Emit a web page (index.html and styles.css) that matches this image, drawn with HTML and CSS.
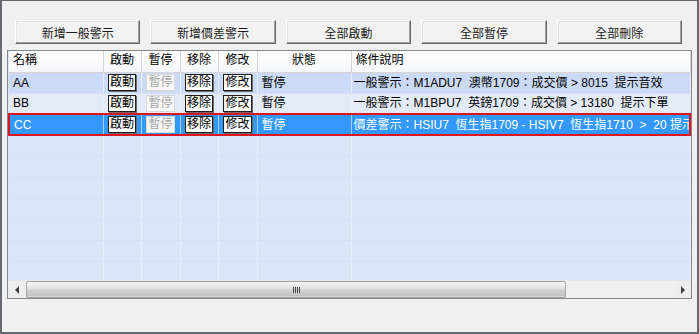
FILE: index.html
```html
<!DOCTYPE html>
<html>
<head>
  <meta charset="utf-8">
  <link rel="stylesheet" href="styles.css">
</head>
<body>
  <div class="window">
    <div class="toolbar">
      <button class="btn">新增一般警示</button>
      <button class="btn">新增價差警示</button>
      <button class="btn">全部啟動</button>
      <button class="btn">全部暫停</button>
      <button class="btn">全部刪除</button>
    </div>

    <div class="list">
      <div class="grid">
        <table class="alerts">
          <colgroup>
            <col class="c-name">
            <col class="c-act">
            <col class="c-act2">
            <col class="c-act">
            <col class="c-act2">
            <col class="c-state">
            <col>
          </colgroup>
          <thead>
            <tr>
              <th class="left">名稱</th>
              <th>啟動</th>
              <th>暫停</th>
              <th>移除</th>
              <th>修改</th>
              <th>狀態</th>
              <th class="left">條件說明</th>
            </tr>
          </thead>
          <tbody>
            <tr class="row-a">
              <td>AA</td>
              <td class="mid"><span class="cell-btn">啟動</span></td>
              <td class="mid"><span class="cell-btn off">暫停</span></td>
              <td class="mid"><span class="cell-btn">移除</span></td>
              <td class="mid"><span class="cell-btn">修改</span></td>
              <td>暫停</td>
              <td class="desc">一般警示：M1ADU7  澳幣1709：成交價 &gt; 8015  提示音效</td>
            </tr>
            <tr class="row-b">
              <td>BB</td>
              <td class="mid"><span class="cell-btn">啟動</span></td>
              <td class="mid"><span class="cell-btn off">暫停</span></td>
              <td class="mid"><span class="cell-btn">移除</span></td>
              <td class="mid"><span class="cell-btn">修改</span></td>
              <td>暫停</td>
              <td class="desc">一般警示：M1BPU7  英鎊1709：成交價 &gt; 13180  提示下單</td>
            </tr>
            <tr class="selected">
              <td>CC</td>
              <td class="mid"><span class="cell-btn">啟動</span></td>
              <td class="mid"><span class="cell-btn off">暫停</span></td>
              <td class="mid"><span class="cell-btn">移除</span></td>
              <td class="mid"><span class="cell-btn">修改</span></td>
              <td>暫停</td>
              <td class="desc">價差警示：HSIU7  恆生指1709 - HSIV7  恆生指1710  &gt;  20 提示</td>
            </tr>
            <tr class="empty"><td></td><td></td><td></td><td></td><td></td><td></td><td></td></tr>
            <tr class="empty"><td></td><td></td><td></td><td></td><td></td><td></td><td></td></tr>
            <tr class="empty"><td></td><td></td><td></td><td></td><td></td><td></td><td></td></tr>
            <tr class="empty"><td></td><td></td><td></td><td></td><td></td><td></td><td></td></tr>
            <tr class="empty"><td></td><td></td><td></td><td></td><td></td><td></td><td></td></tr>
            <tr class="empty"><td></td><td></td><td></td><td></td><td></td><td></td><td></td></tr>
            <tr class="empty"><td></td><td></td><td></td><td></td><td></td><td></td><td></td></tr>
            <tr class="empty"><td></td><td></td><td></td><td></td><td></td><td></td><td></td></tr>
            <tr class="empty"><td></td><td></td><td></td><td></td><td></td><td></td><td></td></tr>
          </tbody>
        </table>
      </div>

      <div class="hscroll">
        <div class="arrow"><span class="tri-left"></span></div>
        <div class="track">
          <div class="thumb"><span class="grip"></span></div>
        </div>
        <div class="arrow"><span class="tri-right"></span></div>
      </div>
    </div>
  </div>
</body>
</html>
```

FILE: styles.css
```css
body {
  margin: 0;
  font-family: "Liberation Sans", "Noto Sans CJK TC", sans-serif;
  font-size: 12px;
  color: #000000;
}

.window {
  box-sizing: border-box;
  width: 699px;
  height: 334px;
  background-color: #f0f0f0;
  border-style: solid;
  border-color: #666a70;
  border-width: 1px 2px 2px 2px;
  display: flex;
  flex-direction: column;
}

.toolbar {
  display: flex;
  gap: 10px;
  padding: 19px 15px 0 13px;
}

.btn {
  flex: 1;
  height: 24px;
  padding: 0;
  font-family: inherit;
  font-size: 12px;
  color: #1a1a1a;
  background-color: #f2f2f2;
  border: 1px solid;
  border-color: #ffffff #6a6a6a #6a6a6a #ffffff;
  box-shadow: inset -1px -1px #a0a0a0, inset 1px 1px #e4e4e4;
}

.list {
  box-sizing: border-box;
  height: 249px;
  margin: 6px 5px 0 5px;
  border: 1px solid #828790;
  display: flex;
  flex-direction: column;
  background-color: #dbe5f8;
}

.grid {
  flex: 1;
  overflow: hidden;
}

.alerts {
  width: 100%;
  table-layout: fixed;
  border-collapse: collapse;
  font-size: 12px;
}

.c-name { width: 94px; }
.c-act { width: 38px; }
.c-act2 { width: 39px; }
.c-state { width: 94px; }

.alerts th {
  box-sizing: border-box;
  height: 21px;
  padding: 0 4px 2px;
  line-height: 16px;
  font-weight: normal;
  text-align: center;
  background: linear-gradient(#ffffff, #f6f7f9);
  border-right: 1px solid #d5d5d5;
  border-bottom: 1px solid #d5d5d5;
  white-space: nowrap;
}

.alerts th.left {
  text-align: left;
}

.alerts td {
  box-sizing: border-box;
  height: 21px;
  padding: 0 4px;
  line-height: 16px;
  border-right: 1px solid #e9eff9;
  border-bottom: 1px solid #d6e1f6;
  white-space: pre;
  overflow: hidden;
}

.alerts td.mid {
  text-align: center;
  padding: 0;
}

.alerts td.desc {
  padding-left: 2px;
  padding-right: 0;
}

.row-a td {
  background-color: #cbdaf6;
}

.row-b td {
  background-color: #e4ebf8;
}

.selected td {
  background-color: #3399ff;
  color: #ffffff;
  border-top: 2px solid #e0141b;
  border-bottom: 2px solid #e0141b;
  border-right: 1px solid #a9cdf5;
}

.selected td:first-child {
  border-left: 2px solid #e0141b;
}

.selected td:last-child {
  border-right: 2px solid #e0141b;
}

.cell-btn {
  display: inline-block;
  vertical-align: middle;
  height: 15px;
  line-height: 15px;
  padding: 0 1px;
  background-color: #ffffff;
  color: #000000;
  border: 1px solid #1e1e1e;
  box-shadow: 1px 1px 0 #6b6b6b;
}

.cell-btn.off {
  color: #a6a6a6;
  border-color: #d8d8d8;
  box-shadow: none;
  background-color: #f9f9f9;
}

.hscroll {
  display: flex;
  height: 17px;
  background-color: #eeeeee;
  border-top: 1px solid #e6e6e6;
}

.arrow {
  width: 17px;
  display: flex;
  align-items: center;
  justify-content: center;
}

.tri-left {
  width: 0;
  height: 0;
  border-top: 4px solid transparent;
  border-bottom: 4px solid transparent;
  border-right: 4px solid #404040;
}

.tri-right {
  width: 0;
  height: 0;
  border-top: 4px solid transparent;
  border-bottom: 4px solid transparent;
  border-left: 4px solid #404040;
}

.track {
  flex: 1;
  padding: 0 1px;
  background-color: #f0f0f0;
}

.thumb {
  box-sizing: border-box;
  width: 540px;
  height: 17px;
  border: 1px solid #a3a3a3;
  border-radius: 2px;
  background: linear-gradient(#f4f4f4, #e3e3e3 45%, #cfcfcf 55%, #c4c4c4 90%, #dedede);
  display: flex;
  align-items: center;
  justify-content: center;
}

.grip {
  width: 7px;
  height: 6px;
  background: repeating-linear-gradient(90deg, #4a4a4a 0 1px, transparent 1px 2px);
}
```
